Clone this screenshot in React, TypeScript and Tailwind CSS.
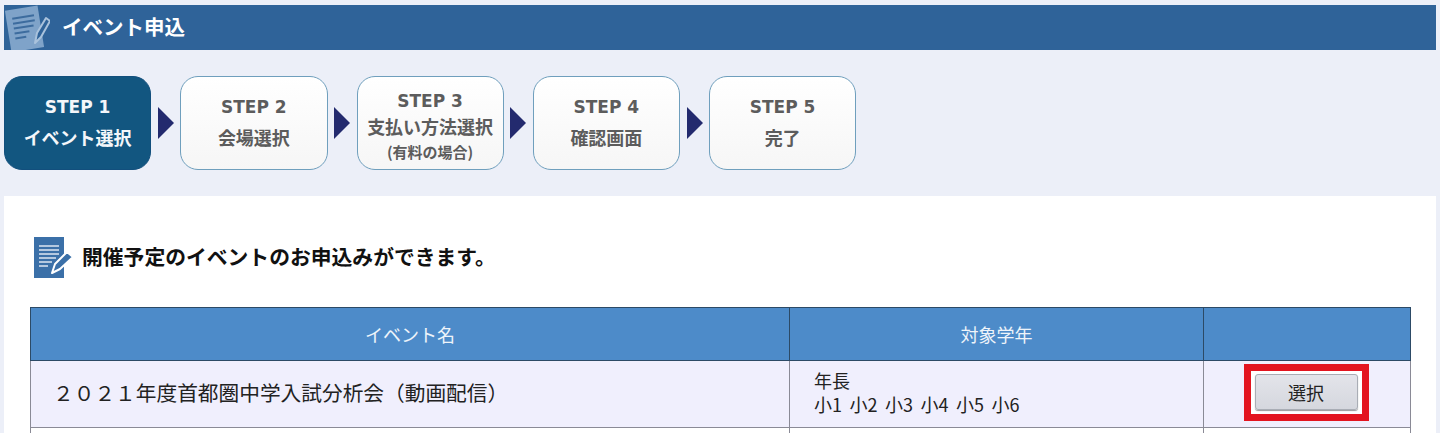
const cjk = "font-['Noto_Sans_CJK_JP',sans-serif]";

const steps = [
  { label: "STEP 1", lines: ["イベント選択"] },
  { label: "STEP 2", lines: ["会場選択"] },
  { label: "STEP 3", lines: ["支払い方法選択"], note: "(有料の場合)" },
  { label: "STEP 4", lines: ["確認画面"] },
  { label: "STEP 5", lines: ["完了"] },
];

const HeaderIcon = () => (
  <svg width="46" height="45" viewBox="0 0 46 45" className="shrink-0">
    <g transform="rotate(-9 20 24)">
      <rect x="4" y="3" width="33" height="42" fill="#7fa3c9" />
      <path d="M10 12h22M10 17h22M10 22h20M10 27h15M10 32h11" stroke="#3d6c9e" strokeWidth="2" />
    </g>
    <path d="M31 38 33 28 42 13l4 3-9 16z" fill="#2f6399" stroke="#a9c2dc" strokeWidth="2" strokeLinejoin="round" />
  </svg>
);

const TitleIcon = () => (
  <svg width="40" height="42" viewBox="0 0 40 42" className="shrink-0">
    <rect x="0" y="0" width="30" height="41" fill="#3b70a8" />
    <path d="M5 9h20M5 13h20M5 17h20M5 21h17M5 25h13M5 29h9" stroke="#b4c8df" strokeWidth="2" />
    <path d="M18 36 21 27 33 15l6 5-13 12z" fill="#3b70a8" stroke="#fff" strokeWidth="2" strokeLinejoin="round" />
  </svg>
);

const Arrow = () => (
  <svg width="16" height="32" viewBox="0 0 16 32" className="shrink-0">
    <path d="M0 0 16 16 0 32z" fill="#232a6e" />
  </svg>
);

const StepBox = ({ step, active }: { step: (typeof steps)[number]; active: boolean }) => (
  <div
    className={`flex h-[94px] w-[147.25px] shrink-0 flex-col items-center justify-center rounded-[18px] border font-bold ${
      step.note ? "pt-[6px]" : "pb-[2px]"
    } ${
      active
        ? "border-[#124f7d] bg-[#125680] text-[#f4f6fa]"
        : "border-[#6f9fbd] bg-gradient-to-b from-white to-[#f6f6f6] text-[#5c5c5c]"
    }`}
  >
    <div className={`font-['DejaVu_Sans',sans-serif] text-[17px] ${step.note ? "leading-[25px]" : "leading-[30px]"}`}>
      {step.label}
    </div>
    {step.lines.map((line) => (
      <div key={line} className={`${cjk} text-[18px] ${step.note ? "leading-[25px]" : "leading-[30px]"}`}>
        {line}
      </div>
    ))}
    {step.note && <div className={`${cjk} text-[15px] leading-[25px]`}>{step.note}</div>}
  </div>
);

const App = () => {
  return (
    <div className={`${cjk} h-[433px] w-[1440px] overflow-hidden bg-[#eceff8] px-1 pt-[5px]`}>
      <div className="flex h-[45px] items-center bg-[#2f6399] pr-3">
        <HeaderIcon />
        <h1 className="ml-[12px] -translate-y-px text-[20.5px] font-bold text-white">イベント申込</h1>
      </div>

      <div className="mt-[26px] flex items-center">
        {steps.map((step, i) => (
          <div key={step.label} className="flex items-center">
            <StepBox step={step} active={i === 0} />
            {i < steps.length - 1 && (
              <div className="flex w-[29px] justify-center">
                <Arrow />
              </div>
            )}
          </div>
        ))}
      </div>

      <div className="mt-[26px] h-[300px] bg-white px-[26px] pt-[41px]">
        <div className="flex h-[41px] items-center pl-[4px]">
          <TitleIcon />
          <h2 className="ml-[8px] -translate-y-px text-[20.8px] font-bold text-[#111]">
            開催予定のイベントのお申込みができます。
          </h2>
        </div>

        <table className="mt-[29px] w-[1380px] table-fixed border-collapse text-[#222]">
          <colgroup>
            <col className="w-[759px]" />
            <col className="w-[414px]" />
            <col className="w-[207px]" />
          </colgroup>
          <thead>
            <tr className="h-[53px] bg-[#4d8bc9] text-[18px] text-[#eef4fa]">
              <th className="border border-[#2c4a66] font-normal">イベント名</th>
              <th className="border border-[#2c4a66] font-normal">対象学年</th>
              <th className="border border-[#2c4a66] font-normal"></th>
            </tr>
          </thead>
          <tbody>
            <tr className="h-[67px] bg-[#f0effd]">
              <td className="border border-[#8a8a96] pb-[2px] pl-[22px] text-[20.7px]">
                ２０２１年度首都圏中学入試分析会（動画配信）
              </td>
              <td className="border border-[#8a8a96] pb-[4px] pl-[24px] text-[18px] leading-[24px]">
                <div>年長</div>
                <div className="[word-spacing:3.5px]">小1 小2 小3 小4 小5 小6</div>
              </td>
              <td className="border border-[#8a8a96] pr-[2px]">
                <div className="mx-auto mb-[4px] box-border flex h-[57px] w-[125px] items-center justify-center border-[7px] border-[#e3141f] bg-white">
                  <button className="h-[36px] w-[103px] rounded-[3px] border border-[#a9adb5] bg-gradient-to-b from-[#e3e4ea] to-[#d5d7de] text-[18px] text-[#222] shadow-[0_1px_1px_#9a9a9a]">
                    選択
                  </button>
                </div>
              </td>
            </tr>
            <tr className="h-[30px] bg-white">
              <td className="border border-[#8a8a96]"></td>
              <td className="border border-[#8a8a96]"></td>
              <td className="border border-[#8a8a96]"></td>
            </tr>
          </tbody>
        </table>
      </div>
    </div>
  );
};

export default App;
